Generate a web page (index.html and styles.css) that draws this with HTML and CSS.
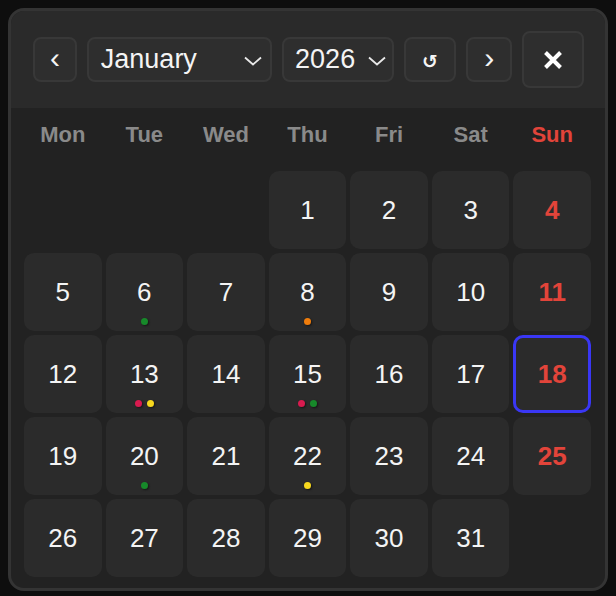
FILE: index.html
```html
<!DOCTYPE html>
<html lang="en">
<head>
    <meta charset="UTF-8">
    <meta name="viewport" content="width=device-width, initial-scale=1.0">
    <title>Date Picker</title>
    <link rel="stylesheet" href="styles.css">
</head>
<body>
    <div class="picker">
        <!-- Header controls -->
        <div class="picker-head">
            <button class="btn btn-nav">&lsaquo;</button>
            <div class="select select-month">
                <span>January</span>
                <svg width="18" height="10" viewBox="0 0 18 10"><path d="M1 1.5 L9 8.5 L17 1.5" fill="none" stroke="#e8e8e8" stroke-width="1.8"/></svg>
            </div>
            <div class="select select-year">
                <span>2026</span>
                <svg width="18" height="10" viewBox="0 0 18 10"><path d="M1 1.5 L9 8.5 L17 1.5" fill="none" stroke="#e8e8e8" stroke-width="1.8"/></svg>
            </div>
            <button class="btn btn-reset">&#8634;</button>
            <button class="btn btn-nav btn-next">&rsaquo;</button>
            <button class="btn btn-close">
                <svg width="20" height="20" viewBox="0 0 20 20"><path d="M2.5 2.5 L17.5 17.5 M17.5 2.5 L2.5 17.5" stroke="#fff" stroke-width="4"/></svg>
            </button>
        </div>

        <!-- Calendar body -->
        <div class="picker-body">
            <div class="weekdays">
                <span>Mon</span><span>Tue</span><span>Wed</span><span>Thu</span><span>Fri</span><span>Sat</span><span class="sun">Sun</span>
            </div>
            <div class="days">
                <div class="empty"></div>
                <div class="empty"></div>
                <div class="empty"></div>
                <div class="day">1</div>
                <div class="day">2</div>
                <div class="day">3</div>
                <div class="day sun">4</div>

                <div class="day">5</div>
                <div class="day">6<span class="dots"><i class="dot green"></i></span></div>
                <div class="day">7</div>
                <div class="day">8<span class="dots"><i class="dot orange"></i></span></div>
                <div class="day">9</div>
                <div class="day">10</div>
                <div class="day sun">11</div>

                <div class="day">12</div>
                <div class="day">13<span class="dots"><i class="dot red"></i><i class="dot yellow"></i></span></div>
                <div class="day">14</div>
                <div class="day">15<span class="dots"><i class="dot red"></i><i class="dot green"></i></span></div>
                <div class="day">16</div>
                <div class="day">17</div>
                <div class="day sun today">18</div>

                <div class="day">19</div>
                <div class="day">20<span class="dots"><i class="dot green"></i></span></div>
                <div class="day">21</div>
                <div class="day">22<span class="dots"><i class="dot yellow"></i></span></div>
                <div class="day">23</div>
                <div class="day">24</div>
                <div class="day sun">25</div>

                <div class="day">26</div>
                <div class="day">27</div>
                <div class="day">28</div>
                <div class="day">29</div>
                <div class="day">30</div>
                <div class="day">31</div>
                <div class="empty"></div>
            </div>
        </div>
    </div>
</body>
</html>
```

FILE: styles.css
```css
/* General */
body {
    background-color: #0e0e0e;
    margin: 8px;
    font-family: "Liberation Sans", Arial, sans-serif;
    color: #f4f4f4;
}

/* Panel */
.picker {
    width: 600px;
    box-sizing: border-box;
    border: 3px solid #343434;
    border-radius: 16px;
    overflow: hidden;
    background-color: #222222;
}

/* Header */
.picker-head {
    height: 97px;
    display: flex;
    align-items: center;
    gap: 10px;
    padding: 0 21px 0 22px;
    background-color: #2a2a2a;
}

.btn, .select {
    box-sizing: border-box;
    height: 45px;
    background-color: #2e2e2e;
    border: 2px solid #383838;
    border-radius: 8px;
    color: #f4f4f4;
    font-family: inherit;
    padding: 0;
    display: flex;
    align-items: center;
    justify-content: center;
}

.btn-nav {
    width: 44px;
    font-size: 30px;
    padding-bottom: 4px;
}

.btn-next {
    width: 46px;
}

.select {
    justify-content: space-between;
    font-size: 27px;
    padding: 0 8px 0 12px;
}

.select svg {
    margin-top: 2px;
}

.select-month {
    width: 186px;
}

.select-year {
    width: 112px;
    padding-left: 11px;
    padding-right: 6px;
}

.btn-reset {
    width: 53px;
    font-family: "DejaVu Sans", sans-serif;
    font-size: 19px;
    font-weight: bold;
    padding-top: 2px;
}

.btn-close {
    width: 62px;
    height: 57px;
}

/* Calendar body */
.picker-body {
    padding: 0 14px 11px 13px;
}

.weekdays {
    height: 54px;
    margin-bottom: 9px;
    display: grid;
    grid-template-columns: repeat(7, 1fr);
    gap: 4px;
    align-items: center;
    text-align: center;
    font-size: 22px;
    font-weight: bold;
    color: #8a8a8a;
}

.weekdays .sun {
    color: #e2443a;
}

.days {
    display: grid;
    grid-template-columns: repeat(7, 1fr);
    grid-auto-rows: 78px;
    gap: 4px;
}

.day {
    position: relative;
    display: flex;
    align-items: center;
    justify-content: center;
    background-color: #2b2b2b;
    border-radius: 10px;
    font-size: 26px;
    box-sizing: border-box;
}

.day.sun {
    color: #e2443a;
    font-weight: bold;
}

.day.today {
    border: 3px solid #3a37f5;
}

/* Event dots */
.dots {
    position: absolute;
    left: 0;
    right: 0;
    bottom: 6px;
    display: flex;
    justify-content: center;
    gap: 5px;
}

.dot {
    width: 7px;
    height: 7px;
    border-radius: 50%;
    box-shadow: 1px 1px 2px rgba(0, 0, 0, 0.5);
}

.dot.green { background-color: #17892a; }
.dot.orange { background-color: #f07d0c; }
.dot.red { background-color: #d81b4f; }
.dot.yellow { background-color: #f7d81e; }
```
